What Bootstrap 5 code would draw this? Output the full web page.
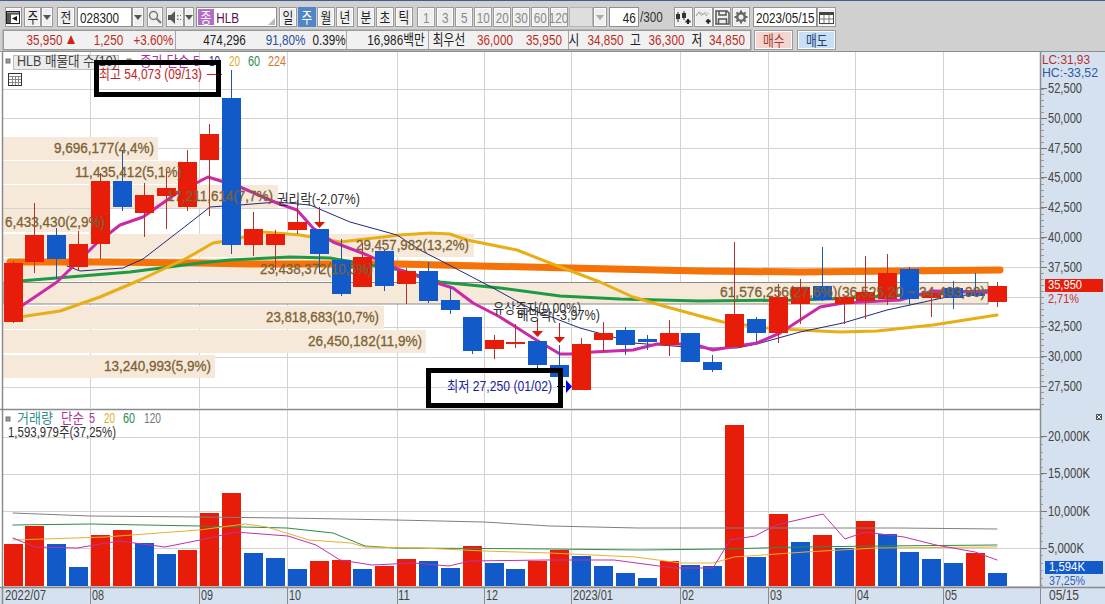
<!DOCTYPE html>
<html lang="ko">
<head>
<meta charset="utf-8">
<title>HLB 차트</title>
<link href="https://cdn.jsdelivr.net/npm/bootstrap@5.3.0/dist/css/bootstrap.min.css" rel="stylesheet">
<style>
html,body{margin:0;height:604px;overflow:hidden;background:#fff}
body{font-family:"Liberation Sans","Noto Sans CJK KR",sans-serif;font-size:15px;color:#222}
.topbar{height:52px;background:#d0d0d0;border-top:1px solid #44608c;border-bottom:1px solid #8e8e8e}
.tbrow{height:20px}
.r1{padding-top:6px;height:26px;box-sizing:border-box;height:26px}
.r2{margin-top:3px}
.tb{padding:0;border:1px solid #9a9a9a;border-radius:0;background:#efefef;font-size:15px;line-height:1;height:20px;color:#222;display:flex;align-items:center;justify-content:center;box-shadow:inset 0 0 0 1px #fbfbfb;overflow:visible;white-space:nowrap;flex:none}
.tb.off{color:#8a8a8a}
.tb.on,.tb.on:hover{background:#4f86c6;color:#fff;border-color:#4f86c6;box-shadow:none}
.tb.buy{background:#f4d6d0;color:#a03a30;height:20px}
.tb.sell{background:#c9dff5;color:#23406e;height:20px}
.sx{display:inline-block;transform:scaleX(.78)}
.fld{padding:0;border:1px solid #8e8e8e;border-radius:0;background:#fff;height:20px;display:flex;align-items:center;flex:none;font-size:15px;line-height:1;min-height:0;color:#222;white-space:nowrap;position:relative}
.fld.blank{background:#dedede;border-color:#b5b5b5}
.jong{display:flex;align-items:center;justify-content:center;width:16px;height:16px;margin-left:1px;background:#b56cc8;color:#fff;flex:none}
.hlb{color:#5c0f56;margin-left:-1px}
.grip{position:absolute;right:1px;bottom:1px;width:0;height:0;border-left:7px solid transparent;border-bottom:7px solid #b9b9b9}
.left6{transform-origin:left center;margin-left:2px}
.right{justify-content:flex-end}
.right6{transform-origin:right center;margin-right:2px}
.plain{color:#333;flex:none;white-space:nowrap}
.plain .sx{transform-origin:left center}
.quote{margin-left:3px;width:748px;height:20px;background:#f1f1f1;border:1px solid #9a9a9a;box-shadow:0 0 0 .5px #9a9a9a}
.sec{height:100%;flex:none;border-left:1px solid #a6a6a6}
.sec.first{border-left:0}
.qc{display:flex;justify-content:center;align-items:center;transform:scaleX(.78);white-space:nowrap;flex:none;line-height:18px;height:18px}
.rd{color:#bd2c24}.bl{color:#2b4f9e}
.tri{width:0;height:0;border-left:4.5px solid transparent;border-right:4.5px solid transparent;border-bottom:9px solid #d8201a;margin-left:5px;margin-top:4px;flex:none}
.dn{width:0;height:0;border-left:4.5px solid transparent;border-right:4.5px solid transparent;border-top:5px solid #555}
.dn.dim{border-top-color:#aaa}
.w10{width:10px}.w11{width:11px}.w12{width:12px}.w14{width:14px}.w16{width:16px}.w17{width:17px}.w18{width:18px}.w19{width:19px}.w24{width:24px}.w29{width:29px}.w30{width:30px}.w34{width:34px}.w35{width:35px}.w36{width:36px}.w39{width:39px}.w41{width:41px}.w55{width:55px}.w58{width:58px}.w64{width:64px}.w81{width:81px}
.s171{width:171px}.s82{width:82px}.s140{width:140px}.s181{width:181px}
.ml1{margin-left:1px}.ml2{margin-left:2px}.ml3{margin-left:3px}.ml4{margin-left:4px}.ml5{margin-left:5px}.ml7{margin-left:7px}.ml8{margin-left:8px}.ml9{margin-left:9px}.ml10{margin-left:10px}.ml11{margin-left:11px}.ml13{margin-left:13px}.ml19{margin-left:19px}.ml20{margin-left:20px}.ml23{margin-left:23px}.ml28{margin-left:28px}
.chartpane{height:552px;line-height:0}
.chartpane svg{display:block}
.ct{font-family:"Liberation Sans","Noto Sans CJK KR",sans-serif;font-size:14px}
.cs{font-size:12.5px}
.ctb{stroke:#7d6236;stroke-width:.3px}
</style>
</head>
<body>
<header class="topbar">
  <div class="tbrow r1 d-flex">
    <button class="btn tb w17 ml5"><svg width="15" height="15" viewBox="0 0 15 15"><rect x=".5" y="1.5" width="13" height="12" fill="#fff" stroke="#222"/><rect x=".5" y="1.5" width="13" height="2.5" fill="#9a9a9a" stroke="#222"/><rect x="1" y="4" width="4" height="9" fill="#555"/><path d="M11 6v5L6 8.500z" fill="#111"/></svg></button>
    <button class="btn tb w17 ml2"><span class="sx">주</span></button>
    <button class="btn tb w12"><span class="dn"></span></button>
    <button class="btn tb w18 ml4"><span class="sx">전</span></button>
    <div class="form-control fld w55 ml2"><span class="sx left6">028300</span></div>
    <button class="btn tb w12"><span class="dn"></span></button>
    <button class="btn tb w16 ml3"><svg width="14" height="14" viewBox="0 0 14 14" fill="none" stroke="#777"><circle cx="5.500" cy="5.500" r="4" stroke-width="1.500"/><path d="M8.500 8.500l4.500 4.500" stroke-width="2.200"/></svg></button>
    <button class="btn tb w18 ml3"><svg width="14" height="13" viewBox="0 0 14 13"><path d="M0 4h3l4-4v13l-4-4H0z" fill="#555"/><path d="M9 4h1.500v1.500H9zM9 7.500h1.500V9H9zM12 4h1v1h-1zM12 8h1v1h-1z" fill="#777"/></svg></button>
    <button class="btn tb w10"><span class="dn"></span></button>
    <div class="form-control fld w81 ml2"><span class="jong"><span class="sx">종</span></span><span class="sx hlb">HLB</span><span class="grip"></span></div>
    <button class="btn tb w18 ml2"><span class="sx">일</span></button>
    <button class="btn tb on w18 ml1"><span class="sx">주</span></button>
    <button class="btn tb w18 ml1"><span class="sx">월</span></button>
    <button class="btn tb w18 ml1"><span class="sx">년</span></button>
    <button class="btn tb w18 ml3"><span class="sx">분</span></button>
    <button class="btn tb w18 ml1"><span class="sx">초</span></button>
    <button class="btn tb w18 ml1"><span class="sx">틱</span></button>
    <button class="btn tb off w18 ml4"><span class="sx">1</span></button>
    <button class="btn tb off w18 ml1"><span class="sx">3</span></button>
    <button class="btn tb off w18 ml1"><span class="sx">5</span></button>
    <button class="btn tb off w18 ml1"><span class="sx">10</span></button>
    <button class="btn tb off w18 ml1"><span class="sx">20</span></button>
    <button class="btn tb off w18 ml1"><span class="sx">30</span></button>
    <button class="btn tb off w18 ml1"><span class="sx">60</span></button>
    <button class="btn tb off w18 ml1"><span class="sx">120</span></button>
    <div class="form-control fld blank w24 ml1"></div>
    <button class="btn tb w14"><span class="dn dim"></span></button>
    <div class="form-control fld w30 ml2 right"><span class="sx right6">46</span></div>
    <div class="plain w24 d-flex align-items-center ml1"><span class="sx">/300</span></div>
    <button class="btn tb w19 ml10"><svg width="17" height="15" viewBox="0 0 17 15"><path d="M3 2v10M9 1v9" stroke="#333"/><rect x="1" y="4" width="4" height="5" fill="#333"/><rect x="7" y="3" width="4" height="5" fill="#333"/><path d="M13 9v5M10.500 11.500h5" stroke="#222" stroke-width="2"/></svg></button>
    <button class="btn tb w19 ml1"><svg width="18" height="15" viewBox="0 0 18 15" fill="none"><path d="M1 6l3-4 3 3 3-2 3 3" stroke="#888"/><path d="M5 1l3 3 3-2 4 2" stroke="#bbb"/><path d="M14 9v5M11.500 11.500h5" stroke="#222" stroke-width="2"/></svg></button>
    <button class="btn tb w18"><svg width="15" height="15" viewBox="0 0 15 15" fill="none" stroke="#555" stroke-width="1.500"><path d="M1 1h11l2 2v11H1z"/><path d="M4 1v4h7V1M3.500 14V9h8v5"/></svg></button>
    <button class="btn tb w18 ml1"><svg width="14" height="14" viewBox="0 0 14 14"><circle cx="7" cy="7" r="3.800" fill="none" stroke="#666" stroke-width="2.500"/><path d="M7 .5v3M7 10.500v3M.5 7h3M10.500 7h3M2.400 2.400l2 2M9.600 9.600l2 2M11.600 2.400l-2 2M4.400 9.600l-2 2" stroke="#666" stroke-width="2"/></svg></button>
    <div class="form-control fld w64 ml3"><span class="sx left6 text-nowrap">2023/05/15</span></div>
    <button class="btn tb w19"><svg width="15" height="13" viewBox="0 0 15 13"><rect x=".5" y="1.500" width="14" height="11" fill="#fff" stroke="#444"/><rect x="1" y="1" width="13" height="3" fill="#444"/><path d="M5 4v8M10 4v8M1 8h13" stroke="#777"/></svg></button>
  </div>
  <div class="tbrow r2 d-flex">
    <div class="quote d-flex">
      <div class="sec first s171 d-flex rd">
        <span class="qc w35 ml23">35,950</span><span class="tri"></span>
        <span class="qc w29 ml19">1,250</span><span class="qc w35 ml13">+3.60%</span>
      </div>
      <div class="sec s171 d-flex">
        <span class="qc w41 ml28">474,296</span><span class="qc w35 ml23 bl">91,80%</span><span class="qc w30 ml11">0.39%</span>
      </div>
      <div class="sec s82 d-flex"><span class="qc w58 ml20">16,986백만</span></div>
      <div class="sec s140 d-flex">
        <span class="qc w34 ml3">최우선</span><span class="qc w36 ml11 rd">36,000</span><span class="qc w36 ml13 rd">35,950</span>
      </div>
      <div class="sec s181 d-flex">
        <span class="qc w10">시</span><span class="qc w35 ml9 rd">34,850</span>
        <span class="qc w11 ml7">고</span><span class="qc w35 ml8 rd">36,300</span>
        <span class="qc w10 ml8">저</span><span class="qc w36 ml7 rd">34,850</span>
      </div>
    </div>
    <button class="btn tb buy w39 ml3"><span class="sx">매수</span></button>
    <button class="btn tb sell w39 ml4"><span class="sx">매도</span></button>
  </div>
</header>
<main class="chartpane" id="pane"></main>
<script>
const R='#e71d0a',B='#1259c9',RW='#b3322a',BW='#23589f';
const C=[
[R,263,322,261,323],[R,235,262,203,273],[B,235,259,228,279],[R,244,267,231,270],[R,181,244,173,259],[B,181,207,150,211],[R,195,213,183,237],[R,188,196,170,229],[R,162,207,150,211],[R,134,160,124,216],
[B,98,245,70,254],[R,229,245,212,256],[R,234,245,230,270],[R,222,230,200,234],[B,229,254,229,273],[B,260,294,239,296],[R,257,287,243,287],[B,251,286,250,291],[R,271,284,268,304],[B,271,301,262,303],
[B,300,310,287,314],[B,317,351,317,354],[R,340,349,335,359],[R,342,344,324,348],[B,341,365,341,368],[B,365,377,345,377],[R,344,390,338,390],[R,333,340,322,352],[B,330,345,327,355],[B,339,342,335,350],
[R,333,345,320,356],[B,333,362,333,362],[B,362,370,355,372],[R,314,347,242,347],[B,319,333,317,342],[R,297,333,284,343],[R,287,304,279,324],[B,286,300,247,301],[R,297,304,296,324],[R,292,301,256,319],
[R,273,299,254,305],[B,269,299,267,305],[R,293,298,293,317],[B,288,298,281,309],[B,293,296,273,296],[R,286,302,282,307]];
const X=[4,25,47,69,91,113,135,157,178,200,222,244,266,288,310,332,353,375,397,419,441,463,485,506,528,550,572,594,616,638,660,681,703,725,747,769,791,813,835,856,878,900,922,944,966,988];
const V=[544,526,544,567,535,530,543,554,550,513,493,553,558,569,561,560,569,566,559,561,568,546,563,569,561,550,556,566,573,578,561,565,566,425,557,514,542,535,548,521,534,552,559,563,553,573];
const VC=[R,R,B,B,R,R,B,B,R,R,R,B,B,B,R,R,B,R,R,B,B,R,B,B,R,R,B,B,B,B,R,B,B,R,B,R,B,R,B,R,B,B,B,B,R,B];
const GX=[90,199,287,397,484,571,680,768,855,943];
let s='';
const rect=(x,y,w,h,f,e='')=>s+=`<rect x="${x}" y="${y}" width="${w}" height="${h}" fill="${f}" ${e}/>`;
const line=(a,b,c,d,col,sw=1)=>s+=`<line x1="${a}" y1="${b}" x2="${c}" y2="${d}" stroke="${col}" stroke-width="${sw}"/>`;
const poly=(p,col,sw)=>s+=`<polyline points="${p.map(q=>q.join(',')).join(' ')}" fill="none" stroke="${col}" stroke-width="${sw}" stroke-linejoin="round" stroke-linecap="round"/>`;
const esc=t=>t.replace(/&/g,'&amp;');
const text=(x,cy,t,col,w,cls='')=>s+=`<text class="ct ${cls}" x="${x}" y="${cy+5}" fill="${col}" ${w?`textLength="${w}" lengthAdjust="spacingAndGlyphs"`:''}>${esc(t)}</text>`;
const GR='#d3d3d3',AX='#d6e1ef',AL='#8b8b8b',TX='#444';

rect(0,52,1105,552,'#fff');
for(let i=0;i<11;i++){const y=88.5+29.8*i;line(3,Math.round(y)+.5,1040,Math.round(y)+.5,GR)}
[437,474,511,548].forEach(y=>line(3,y+.5,1040,y+.5,GR));
GX.forEach(x=>{line(x+.5,52,x+.5,408,GR);line(x+.5,410,x+.5,586,GR)});
const BE='#f6e9d9';
[[137,158],[161,182],[185,278],[209,107],[234,474],[258,378],[306,384],[330,426],[355,215]].forEach(b=>rect(3,b[0],b[1]-3,23,BE));
rect(3,282.500,985,21.500,BE,'stroke="#8b8b8b"');
poly([[10,262],[100,262],[200,263],[250,264],[400,264],[480,266],[570,268],[700,271],[800,272],[900,271],[1000,270]],'#f47208',7);
poly([[20,281],[130,272],[200,263],[230,260],[290,257],[330,258],[400,270],[440,282],[500,288],[560,296],[620,299],[700,301],[800,300],[850,298],[1000,290]],'#1e9a45',3);
poly([[13,318],[60,311],[100,297],[140,280],[187,258],[213,243],[233,240],[263,232],[300,235],[340,242],[400,235],[430,233],[450,234],[467,240],[517,250],[550,263],[600,282],[633,297],[667,307],[700,316],[723,322],[767,328],[800,330],[840,332],[877,331],[933,325],[997,315]],'#e7ae15',3);
poly([[67,266],[80,271],[123,268],[143,259],[187,225],[210,207],[240,205],[277,202],[310,205],[350,222],[397,235],[420,250],[453,267],[493,288],[533,310],[580,328],[613,337],[633,343],[660,345],[700,348],[737,348],[757,344],[800,332],[843,323],[887,310],[947,297],[987,293]],'#1f2a80',1);
poly([[20,307],[57,282],[97,243],[120,225],[143,217],[177,193],[208,177],[240,187],[277,203],[297,210],[313,228],[333,242],[367,255],[400,270],[437,283],[453,288],[473,303],[500,317],[533,338],[560,354],[570,354],[593,352],[633,350],[657,344],[693,344],[713,350],[737,346],[757,343],[780,333],[820,307],[843,303],[900,300],[933,291],[987,292]],'#c92aa7',3);
C.forEach((c,i)=>{const x=X[i];line(x+9.5,c[3],x+9.5,c[4],c[0]===R?RW:BW);rect(x,c[1],19,c[2]-c[1],c[0])});
const arrow=(x,a,b,c)=>{line(x,a,x,b,'#c0201a');s+=`<path d="M${x-5.500} ${b}h11l-5.500 ${c-b}z" fill="#e0140a"/>`};
arrow(319.500,207,222,228);arrow(537.500,320,331,337);arrow(559.500,323,337,343);
const BT='#7d6236';
[[54,148,'9,696,177(4,4%)',100],[75,172,'11,435,412(5,1%)',107],[167,196,'17,211,614(7,7%)',106],[5,222,'6,433,430(2,9%)',100],[356,245,'29,457,982(13,2%)',113],[260,269,'23,438,372(10,5%)',113],[720,292,'61,576,256(27,6%)(36,525,20 ~ 34,493,90)',265],[266,317,'23,818,683(10,7%)',113],[308,341,'26,450,182(11,9%)',114],[104,366,'13,240,993(5,9%)',107]].forEach(t=>text(t[0],t[1],t[2],BT,t[3],'ctb'));
text(277,199,'권리락(-2,07%)','#333',83);
text(493,308,'유상증자(0,00%)','#333',88);
text(517,315,'배당락(-3,97%)','#333',83);
rect(6,59,4,4,'#999','stroke="#777"');
rect(13.500,55.500,105,14,'#ececec','stroke="#bdbdbd"');
text(17,61,'HLB 매물대 수(10)','#444',100);
rect(127,59,4,4,'#999','stroke="#777"');
text(140,61,'종가 단순 5','#a92fa6',60);
text(209,61,'10','#1f2a80',11);text(229,61,'20','#e0ac2a',11);text(248,61,'60','#2a8a4a',12);text(268,61,'224','#d9762b',18);
s+='<rect x="8.500" y="73.500" width="13" height="12" fill="#fff" stroke="#333"/><path d="M9 76.500h12M9 79.500h12M9 82.500h12M12.500 76v9M15.500 76v9M18.500 76v9" stroke="#888"/>';
text(99,74,'최고 54,073 (09/13)','#c0242a',103);line(207,74.500,222,74.500,'#d02020');
text(447,386,'최저 27,250 (01/02)','#1a1aa0',105);line(557,386.500,565,386.500,'#1a1aa0');
s+='<path d="M566 380l6 6.500-6 6.500z" fill="#0000e0"/>';
rect(96.500,62.500,122,32,'none','stroke="#000" stroke-width="5"');
rect(428.500,370.500,132,35,'none','stroke="#000" stroke-width="5"');
line(0,409.500,1040,409.500,AL,1.500);
V.forEach((v,i)=>rect(X[i],v,19,586-v,VC[i]));
poly([[13,513],[90,516],[199,517],[287,518],[396,520],[484,522],[550,526],[638,528],[723,528],[899,528],[997,529]],'#808080',1);
poly([[13,525],[90,524],[199,526],[287,528],[333,533],[365,546],[396,548],[484,548.500],[550,549],[640,550],[723,549],[800,547],[880,546],[997,545]],'#2c8c4c',1);
poly([[13,540],[105,537],[199,530],[245,524],[267,527],[309,540],[351,543],[365,547],[421,548],[484,551],[550,553],[635,557],[681,563],[713,563],[734,557],[805,552],[876,548],[997,547]],'#e6b030',1);
poly([[13,538],[35,547],[77,548],[119,541],[165,547],[210,538],[235,532],[288,536],[316,545],[340,560],[372,565],[414,563],[449,566],[470,561],[547,560],[614,560],[674,568],[713,568],[730,540],[755,536],[776,525],[823,514],[845,539],[865,532],[904,537],[936,545],[975,552],[997,560]],'#c030a8',1);
rect(6,417,4,4,'#999','stroke="#777"');
text(17,418,'거래량','#2f8f8f',36);text(61,418,'단순','#b030a0',23);text(89,418,'5','#b030a0',6);text(104,418,'20','#e0ac2a',11);text(123,418,'60','#2a8a4a',12);text(144,418,'120','#777',17);
text(8,432,'1,593,979주(37,25%)','#333',108);
rect(1040,52,65,552,AX);
line(1040.500,52,1040.500,604,AL,1.500);
for(let y=88.500;y<408;y+=5.960)line(1041,Math.round(y)+.5,1044,Math.round(y)+.5,'#9a9a9a');
[[88,'52,500'],[118,'50,000'],[148,'47,500'],[177,'45,000'],[207,'42,500'],[237,'40,000'],[267,'37,500'],[326,'32,500'],[356,'30,000'],[386,'27,500']].forEach(a=>{line(1041,a[0]+.5,1047,a[0]+.5,'#777');text(1048,a[0],a[1],TX,34)});
text(1042,59,'LC:31,93','#b8302a',48,'cs');text(1042,72,'HC:-33,52','#2b5aa8',56,'cs');
rect(1045,279,58,13,R);text(1048,284,'35,950','#fff',34,'cs');text(1048,298,'2,71%','#c8302a',31,'cs');
for(let y=437;y<586;y+=7.4)line(1041,Math.round(y)+.5,1043,Math.round(y)+.5,'#a0a0a0');
[[436,'20,000K',42],[473,'15,000K',42],[511,'10,000K',42],[548,'5,000K',36]].forEach(a=>{line(1041,a[0]+.5,1047,a[0]+.5,'#777');text(1048,a[0],a[1],TX,a[2])});
rect(1045,561,58,13,B);text(1049,566,'1,594K','#fff',36,'cs');text(1049,580,'37,25%','#2b62b8',36,'cs');
s+='<rect x="1096" y="414" width="6" height="6" fill="#555"/><path d="M1097 415l4 4M1101 415l-4 4" stroke="#fff"/>';
line(3,586.500,1040,586.500,'#c8c8c8');
rect(0,587,1105,17,AX);
line(0,587.500,1105,587.500,AL,1.500);
line(2.500,52,2.500,604,AL,1.500);
GX.forEach(x=>line(x+.5,587,x+.5,604,AL));
line(1040.500,587,1040.500,604,AL);
[[5,'2022/07',41],[92,'08',12],[201,'09',12],[289,'10',12],[398,'11',12],[486,'12',12],[573,'2023/01',40],[682,'02',12],[770,'03',12],[857,'04',12],[945,'05',12],[1049,'05/15',30]].forEach(a=>text(a[0],595,a[1],TX,a[2]));
document.getElementById('pane').innerHTML=`<svg xmlns="http://www.w3.org/2000/svg" width="1105" height="552" viewBox="0 52 1105 552">${s}</svg>`;
</script>
<script src="https://cdn.jsdelivr.net/npm/bootstrap@5.3.0/dist/js/bootstrap.bundle.min.js"></script>
</body>
</html>
